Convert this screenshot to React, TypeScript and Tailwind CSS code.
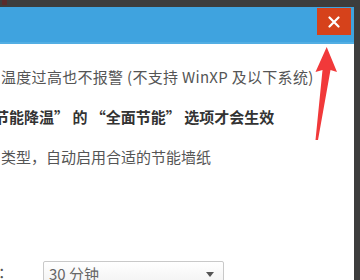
export default function App() {
  return (
    <div
      className="relative w-[360px] h-[280px] overflow-hidden bg-[#3d3d3d] flex flex-col"
      style={{ fontFamily: '"Microsoft YaHei", "Noto Sans CJK SC", "Noto Sans", sans-serif' }}
    >
      <div className="h-[7px] shrink-0 flex">
        <div className="ml-[2px] w-[5px] h-[5px] bg-[#5a2b2b]" />
      </div>
      <div className="flex flex-1 min-h-0">
        <div className="w-[354px] bg-white flex flex-col">
          <div className="h-[37px] shrink-0 bg-[#3fa3df] flex flex-col">
            <div className="flex-1 flex justify-end pt-[1px] pr-[3px]">
              <button className="w-[34px] h-[27px] bg-[#d6421b] flex items-center justify-center">
                <svg width="12" height="12" viewBox="0 0 12 12">
                  <path d="M1.5 1.5 L10.5 10.5 M10.5 1.5 L1.5 10.5" stroke="#fff" strokeWidth="2.2" strokeLinecap="round" />
                </svg>
              </button>
            </div>
            <div className="h-[2px] bg-[#52aee3]" />
          </div>
          <div className="flex flex-col text-[15px] leading-[20px] text-[#555]">
            <div className="mt-[23px] pl-[1px] whitespace-nowrap tracking-[0.3px]">温度过高也不报警 (不支持 WinXP 及以下系统)</div>
            <div className="mt-[20px] -ml-[6px] whitespace-nowrap font-bold text-[#333]">
              节能降温” 的 “全面节能” 选项才会生效
            </div>
            <div className="mt-[20px] pl-[1px] whitespace-nowrap">类型，自动启用合适的节能墙纸</div>
            <div className="mt-[94px] flex items-start">
              <span className="w-[43px] -ml-[2px] pt-[1px]">：</span>
              <div className="w-[181px] ml-[2px] h-[26px] border border-[#c9c9c9] rounded-[2px] bg-gradient-to-b from-white to-[#f1f1f1] flex items-center justify-between pl-[5px] pr-[9px] text-[#666]">
                <span>30 分钟</span>
                <svg width="8" height="5" viewBox="0 0 8 5">
                  <path d="M0 0 H8 L4 5 Z" fill="#555" />
                </svg>
              </div>
            </div>
          </div>
        </div>
        <div className="flex-1" />
      </div>
      <svg className="absolute left-0 top-0 pointer-events-none" width="360" height="280" viewBox="0 0 360 280">
        <path d="M326.7 47 L337 72 L330.5 70 L318 140 L315.5 140 L322.5 70 L315.5 72 Z" fill="#f1393a" />
      </svg>
    </div>
  );
}
